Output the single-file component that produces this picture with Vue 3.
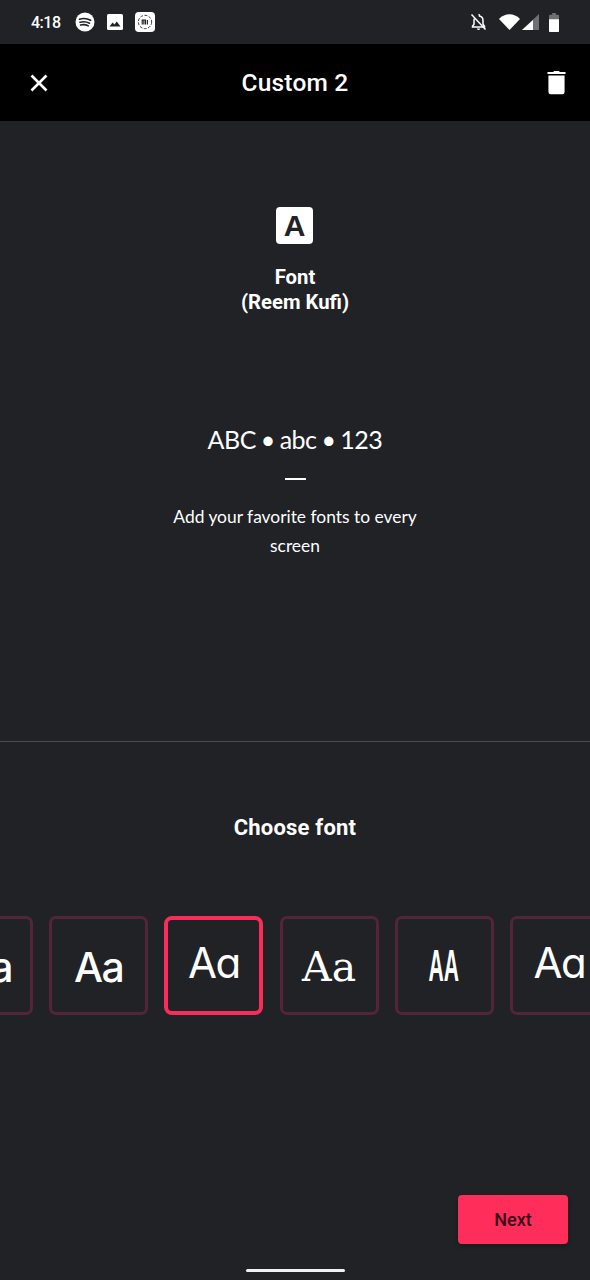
<script setup>
const tiles = [
  { text: 'a', cls: 'f-geo', clip: true },
  { text: 'Aa', cls: 'f-geo' },
  { text: 'Aa', cls: 'f-light', selected: true },
  { text: 'Aa', cls: 'f-serif' },
  { text: 'AA', cls: 'f-narrow' },
  { text: 'Aa', cls: 'f-light' }
]
</script>

<template>
  <div class="screen">
    <div class="status">
      <div class="status-left">
        <span class="time">4:18</span>
        <svg class="ic-spotify" width="20" height="20" viewBox="0 0 20 20">
          <circle cx="10" cy="10" r="9.5" fill="#fff" />
          <path d="M4.5 7.2C8 6.2 12.5 6.5 15.6 8.3M5 10.2C8 9.4 11.8 9.7 14.5 11.2M5.6 13C8 12.4 11 12.6 13.3 13.9" fill="none" stroke="#202226" stroke-width="1.6" stroke-linecap="round" />
        </svg>
        <svg class="ic-photo" width="16" height="16" viewBox="0 0 16 16">
          <rect width="16" height="16" rx="1.5" fill="#fff" />
          <path d="M2.5 12.5 5.6 8.6 7.4 10.4 9.8 7.4 13.5 12.5Z" fill="#202226" />
        </svg>
        <svg class="ic-mi" width="20" height="20" viewBox="0 0 21 21">
          <rect width="21" height="21" rx="4" fill="#fff" />
          <circle cx="10.5" cy="10.5" r="7" fill="none" stroke="#333" stroke-width="1" stroke-dasharray="3 1.6" />
          <path d="M7.6 13V8.4H11V13M9.3 9V13M13 8.4V13" fill="none" stroke="#222" stroke-width="1.2" />
        </svg>
      </div>
      <div class="status-right">
        <svg width="17" height="18" viewBox="0 0 16 18">
          <path d="M8 1.5a1 1 0 0 1 1 1v.6c2.200.5 3.500 2.300 3.500 4.600v3.500l1.500 2v.8H2v-.8l1.500-2V7.700c0-.8.200-1.600.500-2.200" fill="none" stroke="#fff" stroke-width="1.500" />
          <path d="M6.500 15.500h3A1.500 1.500 0 0 1 6.500 15.500Z" fill="#fff" />
          <path d="M1 1.500 15 16.500" stroke="#fff" stroke-width="1.500" />
        </svg>
        <svg class="ic-wifi" width="21" height="16" viewBox="0 0 21 16">
          <path d="M0 5C6 -1.200 15 -1.200 21 5L10.500 16Z" fill="#fff" />
        </svg>
        <svg class="ic-signal" width="17" height="16" viewBox="0 0 17 16">
          <path d="M17 0V16H0Z" fill="#6f7073" />
          <path d="M11 6V16H0L11 6Z" fill="#fff" />
        </svg>
        <svg class="ic-batt" width="10" height="19" viewBox="0 0 10 17" preserveAspectRatio="none">
          <path d="M3.200 0H6.800V1.500H9a1 1 0 0 1 1 1V16a1 1 0 0 1-1 1H1a1 1 0 0 1-1-1V2.500a1 1 0 0 1 1-1H3.200Z" fill="#6f7073" />
          <path d="M0 5.500H10V16a1 1 0 0 1-1 1H1a1 1 0 0 1-1-1Z" fill="#fff" />
        </svg>
      </div>
    </div>

    <header class="bar">
      <svg class="close" width="18" height="18" viewBox="0 0 18 18">
        <path d="M1.500 1.500 16.500 16.500M16.500 1.500 1.500 16.500" stroke="#fff" stroke-width="2.600" />
      </svg>
      <h1 class="title">Custom 2</h1>
      <svg class="trash" width="19" height="25" viewBox="0 0 20 25">
        <path d="M6.500 1.500 7.500.3H12.500L13.500 1.500H19.500V3.500H.5V1.500Z" fill="#fff" />
        <path d="M1.500 5H18.500V22.500A2.300 2.300 0 0 1 16.200 24.800H3.800A2.300 2.300 0 0 1 1.500 22.500Z" fill="#fff" />
      </svg>
    </header>

    <section class="preview">
      <div class="badge">A</div>
      <div class="font-name">Font<br />(Reem Kufi)</div>
      <div class="sample">ABC • abc • 123</div>
      <div class="dash"></div>
      <p class="desc">Add your favorite fonts to every screen</p>
    </section>

    <section class="chooser">
      <h2 class="choose">Choose font</h2>
      <div class="tiles">
        <div v-for="(t, i) in tiles" :key="i" class="tile" :class="{ selected: t.selected, clip: t.clip }">
          <span :class="t.cls">{{ t.text }}</span>
        </div>
      </div>
    </section>

    <div class="actions">
      <button class="next">Next</button>
    </div>
    <div class="home-wrap"><div class="home"></div></div>
  </div>
</template>

<style>
html, body { margin: 0; background: #202226; }
</style>

<style scoped>
.screen {
  width: 590px;
  height: 1280px;
  background: #202226;
  color: #fff;
  overflow: hidden;
  display: flex;
  flex-direction: column;
  font-family: "Roboto", "Liberation Sans", sans-serif;
}
.status {
  height: 44px;
  display: flex;
  align-items: center;
  justify-content: space-between;
  padding: 0 31px;
  box-sizing: border-box;
}
.status-left, .status-right { display: flex; align-items: center; }
.time { font-size: 16px; font-weight: 500; letter-spacing: -.5px; width: 44px; }
.ic-photo { margin-left: 12px; }
.ic-mi { margin-left: 12px; }
.ic-wifi { margin-left: 12px; }
.ic-signal { margin-left: 2px; }
.ic-batt { margin-left: 10px; }
.bar {
  height: 77px;
  background: #000;
  display: grid;
  grid-template-columns: 1fr auto 1fr;
  align-items: center;
  padding: 0 24px;
  box-sizing: border-box;
}
.close { margin-left: 6px; }
.trash { justify-self: end; }
.title {
  margin: 0;
  font-size: 24.5px;
  font-weight: 500;
  letter-spacing: .2px;
}
.preview {
  height: 621px;
  box-sizing: border-box;
  border-bottom: 1px solid #4a4c50;
  display: flex;
  flex-direction: column;
  align-items: center;
  padding-top: 86px;
}
.badge {
  width: 37px;
  height: 37px;
  margin-left: -1px;
  border-radius: 4px;
  background: #fff;
  color: #202226;
  font: 700 30px/37px "Liberation Sans", sans-serif;
  text-align: center;
}
.font-name {
  margin-top: 21px;
  text-align: center;
  font: 700 20.3px/25px "Roboto", sans-serif;
}
.sample {
  margin-top: 108px;
  font: 400 25px/32px "Lato", sans-serif;
  letter-spacing: -.5px;
  word-spacing: -1px;
}
.dash {
  width: 21px;
  height: 2px;
  background: #fff;
  margin-top: 23px;
}
.desc {
  margin: 22px 0 0;
  width: 270px;
  text-align: center;
  font: 400 17.4px/29px "Lato", sans-serif;
}
.chooser { display: flex; flex-direction: column; }
.choose {
  margin: 71px 0 0;
  text-align: center;
  font-size: 22px;
  line-height: 30px;
  font-weight: 700;
  letter-spacing: .2px;
}
.tiles {
  display: flex;
  gap: 16.2px;
  margin: 73px 0 0 -66px;
}
.tile {
  flex: 0 0 99px;
  height: 99px;
  box-sizing: border-box;
  border: 3px solid #53243a;
  border-radius: 7px;
  display: flex;
  align-items: center;
  justify-content: center;
  font-size: 44px;
}
.tile.selected { border: 4px solid #fb2c5a; border-radius: 8px; }
.tile.clip { justify-content: flex-end; padding-right: 18px; }
.f-geo { font-family: "Inter", sans-serif; font-weight: 500; font-size: 41px; letter-spacing: -1.5px; margin-top: 2px; }
.f-light { font-family: "Inter", sans-serif; font-feature-settings: "cv11"; font-weight: 400; font-size: 42px; letter-spacing: -1.5px; margin-top: -6px; }
.f-serif { font-family: "DejaVu Serif", serif; font-weight: 400; font-size: 41px; margin-top: 3px; }
.f-narrow { font-family: "Liberation Sans", sans-serif; font-weight: 700; font-size: 44px; display: inline-block; transform: scaleX(.48); }
.actions {
  display: flex;
  justify-content: flex-end;
  padding: 180px 22px 0 0;
}
.next {
  width: 110px;
  height: 49px;
  border: 0;
  border-radius: 4px;
  background: #ff2d5a;
  color: #3a0a18;
  font: 500 18px "Roboto", sans-serif;
  box-shadow: 0 2px 4px rgba(0,0,0,.3);
}
.home-wrap { display: flex; justify-content: center; padding-top: 25px; }
.home { width: 99px; height: 3px; border-radius: 2px; background: #f1f1f1; }
</style>
